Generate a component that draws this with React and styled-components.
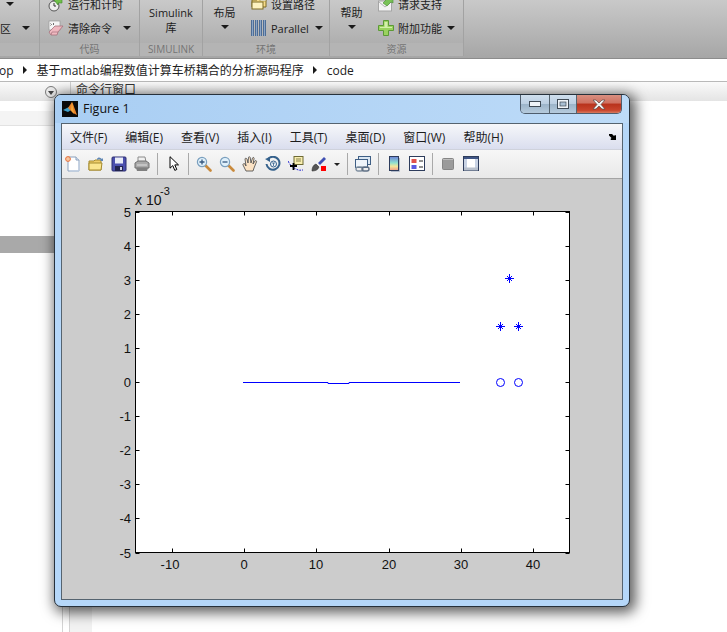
import styled, { createGlobalStyle } from 'styled-components';

const UI_FONT = `"Open Sans", "Noto Sans CJK SC", sans-serif`;
const PLOT_FONT = `"Liberation Sans", Arial, sans-serif`;

const GlobalStyle = createGlobalStyle`
  html, body {
    margin: 0;
    padding: 0;
    background: #fff;
  }
  * {
    box-sizing: border-box;
  }
`;

const Page = styled.div`
  position: relative;
  width: 727px;
  height: 632px;
  overflow: hidden;
  display: flex;
  flex-direction: column;
  background: #fff;
  color: #1c1c1c;
  font-family: ${UI_FONT};
  font-size: 12px;
`;

/* ---------- ribbon ---------- */

const Ribbon = styled.div`
  display: flex;
  flex: none;
  height: 59px;
  overflow: hidden;
  font-size: 11px;
  background: linear-gradient(#c9c9c9, #a6a6a6);
  border-bottom: 1px solid #8c8c8c;
`;

const Group = styled.div`
  flex: none;
  width: ${(props) => props.$width}px;
  height: 56px;
  display: flex;
  flex-direction: column;
  border-right: 1px solid #a2a2a2;
`;

const GroupBody = styled.div`
  height: 43px;
  display: flex;
  align-items: flex-end;
  padding: 0 0 3px ${(props) => props.$pad || 0}px;
  gap: ${(props) => props.$gap || 0}px;
`;

const GroupLabel = styled.div`
  height: 13px;
  line-height: 13px;
  text-align: center;
  font-size: 10px;
  color: #747474;
  background: #b4b4b4;
`;

const Stack = styled.div`
  display: flex;
  flex-direction: column;
`;

const ActionRow = styled.div`
  height: 24px;
  display: flex;
  align-items: center;
  gap: 4px;
  white-space: nowrap;
`;

const TallButton = styled.div`
  align-self: flex-start;
  width: ${(props) => props.$width}px;
  padding-top: 5px;
  display: flex;
  flex-direction: column;
  align-items: center;
  line-height: 15px;
  white-space: nowrap;
`;

const Caret = styled.span`
  flex: none;
  width: 0;
  height: 0;
  margin-left: ${(props) => props.$left || 0}px;
  margin-top: ${(props) => props.$top || 0}px;
  border-left: 4px solid transparent;
  border-right: 4px solid transparent;
  border-top: 4px solid #1a1a1a;
`;

/* ---------- path bar and panels ---------- */

const PathBar = styled.div`
  flex: none;
  height: 23px;
  display: flex;
  align-items: center;
  gap: 9.5px;
  margin-left: -1px;
  border-bottom: 1px solid #b9b9b9;
  white-space: nowrap;
  font-size: 12px;
  color: #222;
`;

const PathArrow = styled.span`
  width: 0;
  height: 0;
  border-top: 4px solid transparent;
  border-bottom: 4px solid transparent;
  border-left: 4px solid #1a1a1a;
`;

const PanelHeaders = styled.div`
  flex: none;
  height: 19px;
  display: flex;
  background: linear-gradient(#fafafa, #e4e4e4);
`;

const LeftHeader = styled.div`
  width: 63px;
  position: relative;
`;

const CollapseButton = styled.span`
  position: absolute;
  left: 45px;
  top: 4px;
  width: 12px;
  height: 12px;
  border: 1px solid #7b7b7b;
  border-radius: 50%;
  background: #ececec;
  display: flex;
  align-items: center;
  justify-content: center;
  &::after {
    content: '';
    border-left: 3px solid transparent;
    border-right: 3px solid transparent;
    border-top: 4px solid #444;
    margin-top: 1px;
  }
`;

const CommandHeader = styled.div`
  margin-left: 7px;
  padding: 0 0 0 5px;
  flex: 1;
  line-height: 15px;
  border-left: 1px solid #cfcfcf;
  color: #333;
`;

const Panels = styled.div`
  flex: 1;
  display: flex;
  min-height: 0;
`;

const LeftPanel = styled.div`
  width: 63px;
  display: flex;
  flex-direction: column;
  border-right: 1px solid #d4d4d4;
`;

const FileHeader = styled.div`
  margin-top: 10px;
  height: 15px;
  flex: none;
  background: #f4f4f4;
  border-bottom: 1px solid #e2e2e2;
`;

const SelectedFile = styled.div`
  margin-top: 110px;
  height: 17px;
  flex: none;
  background: #a9a9a9;
`;

const Gutter = styled.div`
  width: 7px;
  border-right: 1px solid #d4d4d4;
`;

const CommandMargin = styled.div`
  width: 22px;
  background: #f2f2f2;
`;

/* ---------- figure window ---------- */

const FigureWindow = styled.div`
  position: absolute;
  left: 54px;
  top: 94px;
  width: 576px;
  height: 513px;
  display: flex;
  flex-direction: column;
  padding: 0 6px 6px;
  border: 1px solid #27313b;
  border-radius: 7px;
  background: #b5d7f9;
  box-shadow: 3px 3px 13px 3px rgba(0, 0, 0, 0.62);
`;

const TitleBar = styled.div`
  flex: none;
  height: 28px;
  margin: 0 -6px;
  padding: 0 6px 0 7px;
  display: flex;
  gap: 5px;
  border-radius: 6px 6px 0 0;
  background: linear-gradient(90deg, #a9cef3, #bddbf8);
`;

const TitleIcon = styled.svg`
  flex: none;
  width: 16px;
  height: 16px;
  margin-top: 6px;
`;

const TitleText = styled.span`
  line-height: 27px;
  font-size: 12.5px;
  color: #111;
`;

const WindowButtons = styled.div`
  margin-left: auto;
  margin-right: 1px;
  height: 19px;
  display: flex;
  overflow: hidden;
  border: 1px solid #4e5d6d;
  border-top: 0;
  border-radius: 0 0 5px 5px;
`;

const WindowButton = styled.div`
  width: ${(props) => props.$width}px;
  display: flex;
  align-items: center;
  justify-content: center;
  border-left: ${(props) => (props.$first ? '0' : '1px solid #55646f')};
  background: ${(props) =>
    props.$close
      ? 'linear-gradient(#d98f80 0, #cf7060 45%, #b8321c 50%, #c9452d 85%, #d77a60 100%)'
      : 'linear-gradient(#cfdfee 0, #bccfe2 48%, #9cb4c9 52%, #b6cbdd 100%)'};
`;

const Client = styled.div`
  flex: 1;
  min-height: 0;
  display: flex;
  flex-direction: column;
  border: 1px solid #55636f;
`;

const MenuBar = styled.div`
  flex: none;
  height: 26px;
  position: relative;
  display: flex;
  align-items: center;
  gap: 18px;
  padding: 1px 0 0 8px;
  font-size: 12px;
  background: linear-gradient(#f6f7fa, #dadeee);
  border-bottom: 1px solid #cfd2dc;
`;

const MenuChevron = styled.svg`
  position: absolute;
  right: 5px;
  top: 10px;
  width: 8px;
  height: 6px;
`;

const ToolBar = styled.div`
  flex: none;
  height: 29px;
  display: flex;
  align-items: center;
  gap: 7px;
  padding-left: 3px;
  background: linear-gradient(#f7f7f7, #e9e9e9);
  border-bottom: 1px solid #a4a4a4;
`;

const ToolIcon = styled.svg`
  flex: none;
  width: ${(props) => props.$width || 16}px;
  height: 16px;
  margin-left: ${(props) => props.$left || 0}px;
`;

const ToolSep = styled.span`
  flex: none;
  width: 1px;
  height: 22px;
  background: #a9a9a9;
`;

const ToolCaret = styled.span`
  flex: none;
  width: 0;
  height: 0;
  border-left: 3px solid transparent;
  border-right: 3px solid transparent;
  border-top: 3px solid #222;
`;

const FigureArea = styled.div`
  flex: 1;
  min-height: 0;
  background: #cccccc;
`;

const PlotSvg = styled.svg`
  display: block;
  width: 560px;
  height: 420px;
  font-family: ${PLOT_FONT};
  font-size: 13px;
  fill: #111;
`;

/* ---------- drawings ---------- */

const StopwatchIcon = () => (
  <svg width="16" height="16" viewBox="0 0 16 16">
    <circle cx="6" cy="10" r="5" fill="#eee" stroke="#555" />
    <path d="M6 10V7M6 10h2" stroke="#333" fill="none" />
    <rect x="4.5" y="3" width="3" height="2" fill="#666" />
    <path d="M6 4l4-3v2h4v4h-4v2z" fill="#6fbf4a" stroke="#3f8a2a" strokeWidth=".6" />
  </svg>
);

const EraserIcon = () => (
  <svg width="16" height="16" viewBox="0 0 16 16">
    <rect x="1" y="1" width="11" height="9" fill="#f4f4f4" stroke="#999" strokeWidth=".7" />
    <path d="M2.5 3.5l1 1-1 1M5 3l1 1-1 1" stroke="#333" strokeWidth=".7" fill="none" />
    <path d="M1 12l6-6h8l-5 6-1 3H3z" fill="#efb8c0" stroke="#a6717b" strokeWidth=".8" />
    <path d="M3 15l1-3h6" stroke="#a6717b" strokeWidth=".7" fill="none" />
  </svg>
);

const FolderSmallIcon = () => (
  <svg width="16" height="16" viewBox="0 0 16 16">
    <path d="M1 4h5l1-2h8v9H1z" fill="#f7dc8a" stroke="#7c6a25" />
    <rect x="1" y="6" width="11" height="7" fill="#fdf2bf" stroke="#7c6a25" />
    <path d="M9 2h6v3H9z" fill="#fff" stroke="#9b8a3a" strokeWidth=".7" />
  </svg>
);

const ParallelIcon = () => (
  <svg width="16" height="16" viewBox="0 0 16 16">
    {[0, 4, 8, 12].map((x) => (
      <rect key={x} x={x} y="0" width="3" height="16" fill="#4d6d96" />
    ))}
    {[1, 5, 9, 13].map((x) => (
      <rect key={x} x={x} y="0" width="1" height="16" fill="#8ba5c6" />
    ))}
  </svg>
);

const SupportIcon = () => (
  <svg width="16" height="16" viewBox="0 0 16 16">
    <rect x="0.5" y="5" width="13" height="10" fill="#f3f3f3" stroke="#a5a5a5" />
    <path d="M1 6l6 5 6-5" stroke="#b5b5b5" fill="none" />
    <path d="M5 7l4-4-1-2h7v6l-2-1-4 4z" fill="#79c257" stroke="#44892f" strokeWidth=".6" />
  </svg>
);

const PlusIcon = () => (
  <svg width="16" height="16" viewBox="0 0 16 16">
    <path
      d="M5.5.5h5v5h5v5h-5v5h-5v-5h-5v-5h5z"
      fill="#9ad25f"
      stroke="#5c9a36"
    />
    <path d="M6.5 2h3v5h-3zM2 7h12v1H2z" fill="#d3efaa" />
  </svg>
);

const MatlabLogo = () => (
  <TitleIcon viewBox="0 0 16 16">
    <rect width="16" height="16" fill="#0a0a0a" />
    <path d="M1 9l4-2 2-1 2 3-3 2z" fill="#3f9fc9" />
    <path d="M6 7l4-6 1 2 4 11-4-2-3-3z" fill="#e8812a" />
    <path d="M10 1l1 6 1 6-3-4z" fill="#f4a93b" />
  </TitleIcon>
);

const NewIcon = () => (
  <ToolIcon viewBox="0 0 16 16">
    <path d="M3 1h8l3 3v11H3z" fill="#fff" stroke="#8aa0bd" />
    <path d="M11 1v3h3" fill="#dfe8f5" stroke="#8aa0bd" />
    <path d="M14 5v10H5" fill="none" stroke="#c5d3e6" />
    <circle cx="3" cy="3" r="2.4" fill="#f5c6a0" stroke="#e8703a" />
  </ToolIcon>
);

const OpenIcon = () => (
  <ToolIcon viewBox="0 0 16 16">
    <path d="M1 5h5l1-1h6v10H1z" fill="#f0cf6a" stroke="#a58a2e" />
    <path d="M1 7h13l-1 7H1z" fill="#fbe68f" stroke="#a58a2e" />
    <path d="M9 3c1-2 3-2 5 0l1-1v3h-3l1-1c-1-1-3-1-4 0z" fill="#5f87b7" />
  </ToolIcon>
);

const SaveIcon = () => (
  <ToolIcon viewBox="0 0 16 16">
    <rect x="1" y="1" width="14" height="14" rx="1" fill="#4b4fae" stroke="#2c2f70" />
    <rect x="4" y="1.5" width="8" height="6" fill="#e9ecf7" />
    <rect x="4" y="10" width="8" height="5" fill="#22244f" />
    <rect x="9" y="11" width="2" height="3" fill="#cfd3e8" />
  </ToolIcon>
);

const PrintIcon = () => (
  <ToolIcon viewBox="0 0 16 16">
    <path d="M4 1h7l1 5H4z" fill="#f0f0f0" stroke="#8b8b8b" />
    <path d="M1 7l3-2h8l3 2v5H1z" fill="#a9a9a9" stroke="#6f6f6f" />
    <path d="M2 12h12l-1 3H3z" fill="#7f7f7f" />
    <path d="M3 9h10" stroke="#dedede" />
  </ToolIcon>
);

const PointerIcon = () => (
  <ToolIcon $width={14} $left={2} viewBox="0 0 14 16">
    <path d="M3 .7v11.5l2.8-2.6 2 4.8 2-.9-2-4.6h3.7z" fill="#fff" stroke="#000" />
  </ToolIcon>
);

const ZoomIcon = ({ plus }) => (
  <ToolIcon viewBox="0 0 16 16">
    <path d="M9.5 9.5l5 5" stroke="#c98a3c" strokeWidth="2.6" strokeLinecap="round" />
    <circle cx="6" cy="6" r="4.6" fill="#dff0fb" stroke="#7a9fbe" strokeWidth="1.2" />
    <path d={plus ? 'M3.5 6h5M6 3.5v5' : 'M3.5 6h5'} stroke="#35577f" strokeWidth="1.3" />
  </ToolIcon>
);

const HandIcon = () => (
  <ToolIcon viewBox="0 0 16 16">
    <path
      d="M4 15L1 9c-.5-1 1-2 2-1l1 2L3 3c0-1 1.500-1 2 0l1 4 .500-5.500c0-1 1.500-1 1.700 0L9 7l1.500-5c.4-1 1.800-.6 1.600.5L11 8l2-3c.6-.9 2-.2 1.500.8L12 12l-1 3z"
      fill="#fbe2c4"
      stroke="#444"
      strokeWidth=".8"
    />
  </ToolIcon>
);

const RotateIcon = () => (
  <ToolIcon viewBox="0 0 16 16">
    <path d="M3 3a6.500 6.500 0 1 1-1.500 5" fill="none" stroke="#35618c" strokeWidth="2" />
    <path d="M0 3l5-2v5z" fill="#35618c" />
    <circle cx="8.500" cy="8" r="3" fill="#eef3f8" stroke="#35618c" />
    <path d="M7 7h3M8.500 7v3" stroke="#35618c" strokeWidth=".8" />
  </ToolIcon>
);

const DataCursorIcon = () => (
  <ToolIcon viewBox="0 0 16 16">
    <rect x="6" y="0.500" width="9" height="8" fill="#f8eeb0" stroke="#6e6a35" />
    <path d="M8 3h5M8 5h5" stroke="#8a8550" />
    <path d="M0 5c2 4 4 6 8 8s4 1 7 1" fill="none" stroke="#2222d0" strokeDasharray="2 1" />
    <path d="M2 10h7M5.500 7v7" stroke="#000" strokeWidth="1.800" />
  </ToolIcon>
);

const BrushIcon = () => (
  <ToolIcon viewBox="0 0 16 16">
    <path d="M7 7l6-6 2 2-6 6z" fill="#3f4fb2" />
    <path d="M1 15c0-3 1-6 4-7l3 3c-1 3-4 4-7 4z" fill="#555" stroke="#333" strokeWidth=".6" />
    <rect x="10" y="10" width="5" height="5" fill="#f00" />
  </ToolIcon>
);

const LinkIcon = () => (
  <ToolIcon viewBox="0 0 16 16">
    <rect x="3.500" y="0.500" width="12" height="8" fill="#dbe7f3" stroke="#3f5f85" />
    <rect x="0.500" y="3.500" width="12" height="8" fill="#eef4fa" stroke="#3f5f85" />
    <rect x="1" y="11" width="7" height="4" rx="2" fill="none" stroke="#7f8fa0" strokeWidth="1.400" />
    <rect x="7" y="11" width="7" height="4" rx="2" fill="none" stroke="#5f7085" strokeWidth="1.400" />
  </ToolIcon>
);

const ColorbarIcon = () => (
  <ToolIcon viewBox="0 0 16 16">
    <defs>
      <linearGradient id="colorbarFill" x1="0" y1="0" x2="0" y2="1">
        <stop offset="0" stopColor="#6a7fd8" />
        <stop offset=".45" stopColor="#8fe0d0" />
        <stop offset=".7" stopColor="#f5e79a" />
        <stop offset="1" stopColor="#f09a88" />
      </linearGradient>
    </defs>
    <rect x="3.500" y="0.500" width="9" height="14" fill="url(#colorbarFill)" stroke="#2d3c5c" />
    <path d="M13.500 2v13.500H5" stroke="#b4bccb" fill="none" />
  </ToolIcon>
);

const LegendIcon = () => (
  <ToolIcon viewBox="0 0 16 16">
    <rect x="0.500" y="0.500" width="15" height="14" fill="#fff" stroke="#2d3c5c" />
    <rect x="2.500" y="3" width="5" height="4" fill="#e0524c" />
    <rect x="2.500" y="9" width="5" height="4" fill="#5a5ae0" />
    <path d="M10 5h4M10 11h4" stroke="#222" />
  </ToolIcon>
);

const BoxIcon = () => (
  <ToolIcon viewBox="0 0 16 16">
    <rect x="2.500" y="2.500" width="11" height="11" rx="1" fill="#9a9a9a" stroke="#858585" />
    <path d="M3 3.500h10" stroke="#bdbdbd" />
  </ToolIcon>
);

const PlotToolsIcon = () => (
  <ToolIcon viewBox="0 0 16 16">
    <rect x="0.500" y="0.500" width="15" height="14" fill="#fff" stroke="#2d3c5c" />
    <rect x="1" y="1" width="14" height="2" fill="#3f5585" />
    <rect x="1" y="3" width="3" height="11" fill="#c9d3e4" />
    <rect x="12" y="3" width="3" height="11" fill="#c9d3e4" />
    <rect x="1" y="11.500" width="14" height="3" fill="#b8c0cc" />
  </ToolIcon>
);

/* ---------- plot, in page coordinates ---------- */

const AXES = { left: 135.5, right: 569.5, top: 211.5, bottom: 552.5 };
const xToPx = (x) => AXES.left + ((x + 15) / 60) * (AXES.right - AXES.left);
const yToPx = (y) => AXES.bottom - ((y + 5) / 10) * (AXES.bottom - AXES.top);

const X_TICKS = [-10, 0, 10, 20, 30, 40];
const Y_TICKS = [-5, -4, -3, -2, -1, 0, 1, 2, 3, 4, 5];
const STARS = [
  [509.5, 278.5],
  [500.5, 326.5],
  [518.5, 326.5],
];
const CIRCLES = [
  [500.5, 382.5],
  [518.5, 382.5],
];

function Plot() {
  return (
    <PlotSvg viewBox="62 179 560 420">
      <rect
        x={AXES.left}
        y={AXES.top}
        width={AXES.right - AXES.left}
        height={AXES.bottom - AXES.top}
        fill="#fff"
        stroke="#000"
      />
      {X_TICKS.map((t) => {
        const x = Math.round(xToPx(t)) + 0.5;
        return (
          <g key={t}>
            <path d={`M${x} ${AXES.top}v4M${x} ${AXES.bottom}v-4`} stroke="#000" />
            <text x={t < 0 ? x - 2.5 : x - 0.5} y="569" textAnchor="middle">
              {t}
            </text>
          </g>
        );
      })}
      {Y_TICKS.map((t) => {
        const y = Math.round(yToPx(t)) + 0.5;
        return (
          <g key={t}>
            <path d={`M${AXES.left} ${y}h4M${AXES.right} ${y}h-4`} stroke="#000" />
            <text x="131" y={y + 4.5} textAnchor="end">
              {t}
            </text>
          </g>
        );
      })}
      <text x="135" y="205" fontSize="14">
        x 10
      </text>
      <text x="160" y="195" fontSize="11">
        -3
      </text>
      <path d="M243 382.500H328V383.500H349V382.500H460" stroke="#0000ff" fill="none" />
      {STARS.map(([x, y]) => (
        <path
          key={`${x}-${y}`}
          d={`M${x - 4.5} ${y}h9M${x} ${y - 4.5}v9M${x - 2.5} ${y - 2.5}l5 5M${x - 2.5} ${y + 2.5}l5 -5`}
          stroke="#0000ff"
          fill="none"
        />
      ))}
      {CIRCLES.map(([x, y]) => (
        <circle key={x} cx={x} cy={y} r="4" stroke="#0000ff" fill="none" />
      ))}
    </PlotSvg>
  );
}

const MENU_ITEMS = ['文件(F)', '编辑(E)', '查看(V)', '插入(I)', '工具(T)', '桌面(D)', '窗口(W)', '帮助(H)'];

export default function App() {
  return (
    <>
      <GlobalStyle />
      <Page>
        <Ribbon>
          <Group $width={40}>
            <GroupBody>
              <Stack>
                <ActionRow>
                  <Caret $left={6} />
                </ActionRow>
                <ActionRow>
                  区
                  <Caret $left={7} />
                </ActionRow>
              </Stack>
            </GroupBody>
            <GroupLabel />
          </Group>
          <Group $width={100}>
            <GroupBody $pad={8}>
              <Stack>
                <ActionRow>
                  <StopwatchIcon />
                  运行和计时
                </ActionRow>
                <ActionRow>
                  <EraserIcon />
                  清除命令
                  <Caret $left={7} />
                </ActionRow>
              </Stack>
            </GroupBody>
            <GroupLabel>代码</GroupLabel>
          </Group>
          <Group $width={63}>
            <GroupBody>
              <TallButton $width={62}>
                <span>Simulink</span>
                <span>库</span>
              </TallButton>
            </GroupBody>
            <GroupLabel>SIMULINK</GroupLabel>
          </Group>
          <Group $width={127}>
            <GroupBody $pad={11} $gap={16}>
              <TallButton $width={21}>
                <span>布局</span>
                <Caret $top={5} />
              </TallButton>
              <Stack>
                <ActionRow>
                  <FolderSmallIcon />
                  设置路径
                </ActionRow>
                <ActionRow>
                  <ParallelIcon />
                  Parallel
                  <Caret $left={2} />
                </ActionRow>
              </Stack>
            </GroupBody>
            <GroupLabel>环境</GroupLabel>
          </Group>
          <Group $width={134}>
            <GroupBody $pad={11} $gap={16}>
              <TallButton $width={21}>
                <span>帮助</span>
                <Caret $top={5} />
              </TallButton>
              <Stack>
                <ActionRow>
                  <SupportIcon />
                  请求支持
                </ActionRow>
                <ActionRow>
                  <PlusIcon />
                  附加功能
                  <Caret $left={1} />
                </ActionRow>
              </Stack>
            </GroupBody>
            <GroupLabel>资源</GroupLabel>
          </Group>
        </Ribbon>

        <PathBar>
          <span>op</span>
          <PathArrow />
          <span>基于matlab编程数值计算车桥耦合的分析源码程序</span>
          <PathArrow />
          <span>code</span>
        </PathBar>

        <PanelHeaders>
          <LeftHeader>
            <CollapseButton />
          </LeftHeader>
          <CommandHeader>命令行窗口</CommandHeader>
        </PanelHeaders>

        <Panels>
          <LeftPanel>
            <FileHeader />
            <SelectedFile />
          </LeftPanel>
          <Gutter />
          <CommandMargin />
        </Panels>

        <FigureWindow>
          <TitleBar>
            <MatlabLogo />
            <TitleText>Figure 1</TitleText>
            <WindowButtons>
              <WindowButton $width={28} $first>
                <svg width="12" height="6" viewBox="0 0 12 6">
                  <rect x="0.500" y="0.500" width="11" height="5" fill="#eef3f8" stroke="#3f4a55" />
                </svg>
              </WindowButton>
              <WindowButton $width={27}>
                <svg width="12" height="10" viewBox="0 0 12 10">
                  <rect x="0.500" y="0.500" width="11" height="9" fill="#eef3f8" stroke="#3f4a55" />
                  <rect x="3" y="3" width="6" height="4" fill="#a9bfd3" stroke="#3f4a55" strokeWidth=".7" />
                </svg>
              </WindowButton>
              <WindowButton $width={45} $close>
                <svg width="14" height="11" viewBox="0 0 14 11">
                  <path
                    d="M1 1h3l3 3 3-3h3l-4 4.500 4 4.500h-3L7 7l-3 3H1l4-4.500z"
                    fill="#f2f2f2"
                    stroke="#5c4a48"
                    strokeWidth=".7"
                  />
                </svg>
              </WindowButton>
            </WindowButtons>
          </TitleBar>
          <Client>
            <MenuBar>
              {MENU_ITEMS.map((item) => (
                <span key={item}>{item}</span>
              ))}
              <MenuChevron viewBox="0 0 8 6">
                <path d="M0 0h3l2 2 1-1 1 .5V6H2l-.5-1 1-1L0 1.500z" fill="#000" />
              </MenuChevron>
            </MenuBar>
            <ToolBar>
              <NewIcon />
              <OpenIcon />
              <SaveIcon />
              <PrintIcon />
              <ToolSep />
              <PointerIcon />
              <ToolSep />
              <ZoomIcon plus />
              <ZoomIcon />
              <HandIcon />
              <RotateIcon />
              <DataCursorIcon />
              <BrushIcon />
              <ToolCaret />
              <ToolSep />
              <LinkIcon />
              <ToolSep />
              <ColorbarIcon />
              <LegendIcon />
              <ToolSep />
              <BoxIcon />
              <PlotToolsIcon />
            </ToolBar>
            <FigureArea>
              <Plot />
            </FigureArea>
          </Client>
        </FigureWindow>
      </Page>
    </>
  );
}
